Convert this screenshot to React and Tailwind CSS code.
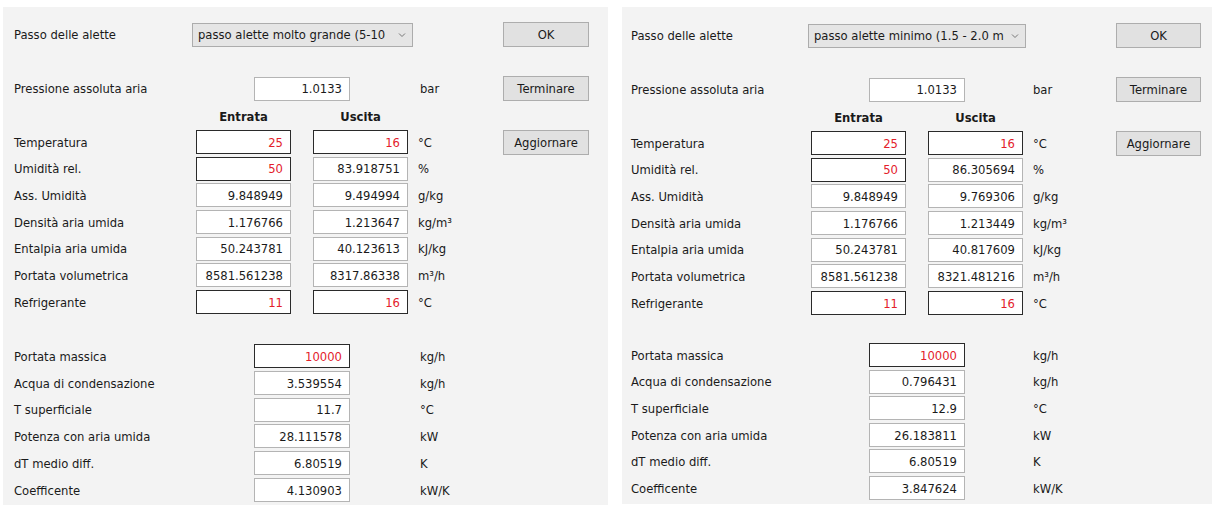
const RED = "text-[#e3202a]";

const leftCfg = {
  panel: "w-[605px] h-[498px] pl-[11px] pt-[15px]",
  lab1: "w-[178px]",
  dd: "w-[221px]",
  okMl: "ml-[90px]",
  btn: "w-[86px]",
  lab2: "w-[240px]",
  barMl: "ml-[70px]",
  barW: "w-[83px]",
  lab3: "w-[182px]",
  unitW: "w-[85px]",
  bottom: "mt-[30px] gap-[2.8px]",
};

const rightCfg = {
  panel: "w-[590px] h-[497px] pl-[9px] pt-[16px]",
  lab1: "w-[177px]",
  dd: "w-[218px]",
  okMl: "ml-[90px]",
  btn: "w-[85px]",
  lab2: "w-[238px]",
  barMl: "ml-[68px]",
  barW: "w-[83px]",
  lab3: "w-[180px]",
  unitW: "w-[83px]",
  bottom: "mt-[28px] gap-[2.6px]",
};

function Field({ value, red, w = "w-[95px]" }) {
  return (
    <div
      className={`${w} h-[24px] bg-white flex items-center justify-end pr-[7px] pt-[3px] border ${
        red ? "border-[#2a2a2a] " + RED : "border-[#b4b4b4] text-[#1a1a1a]"
      }`}
    >
      {value}
    </div>
  );
}

function Button({ label, w }) {
  return (
    <div className={`${w} h-[25px] bg-[#e1e1e1] border border-[#adadad] flex items-center justify-center pt-[3px] text-[#1a1a1a]`}>
      {label}
    </div>
  );
}

function Panel({ c, dropdown, rows, bottom }) {
  return (
    <div className={`${c.panel} bg-[#f3f3f3] flex flex-col shrink-0`}>
      <div className="flex items-center h-[25px]">
        <div className={`${c.lab1} pt-[3px]`}>Passo delle alette</div>
        <div className={`${c.dd} h-[24px] bg-[#e5e5e5] border border-[#acacac] flex items-center pl-[5px] pr-[6px]`}>
          <div className="flex-1 overflow-hidden whitespace-nowrap pt-[2px]">{dropdown}</div>
          <svg width="8" height="6" viewBox="0 0 8 6" className="ml-[4px] shrink-0">
            <polyline points="1,1.5 4,4.5 7,1.5" fill="none" stroke="#777" strokeWidth="1" />
          </svg>
        </div>
        <div className={c.okMl}>
          <Button label="OK" w={c.btn} />
        </div>
      </div>

      <div className="flex items-center h-[25px] mt-[29px]">
        <div className={`${c.lab2} pt-[3px]`}>Pressione assoluta aria</div>
        <Field value="1.0133" w="w-[96px]" />
        <div className={`${c.barMl} ${c.barW} pt-[3px]`}>bar</div>
        <Button label="Terminare" w={c.btn} />
      </div>

      <div className="flex items-center h-[16px] mt-[8px] pt-[2px] font-bold">
        <div className={c.lab3}></div>
        <div className="w-[95px] text-center">Entrata</div>
        <div className="w-[95px] ml-[22px] text-center">Uscita</div>
      </div>

      <div className="flex flex-col gap-[2.67px] mt-[5px]">
        {rows.map((r, i) => (
          <div key={r.label} className="flex items-center h-[24px]">
            <div className={`${c.lab3} pt-[3px]`}>{r.label}</div>
            <Field value={r.a} red={r.red || r.redA} />
            <div className="ml-[22px]">
              <Field value={r.b} red={r.red} />
            </div>
            <div className={`ml-[10px] ${c.unitW} pt-[3px]`}>{r.unit}</div>
            {i === 0 && <Button label="Aggiornare" w={c.btn} />}
          </div>
        ))}
      </div>

      <div className={`flex flex-col ${c.bottom}`}>
        {bottom.map((r) => (
          <div key={r.label} className="flex items-center h-[24px]">
            <div className={`${c.lab2} pt-[3px]`}>{r.label}</div>
            <Field value={r.v} red={r.red} w="w-[96px]" />
            <div className={`${c.barMl} pt-[3px]`}>{r.unit}</div>
          </div>
        ))}
      </div>
    </div>
  );
}

const leftRows = [
  { label: "Temperatura", a: "25", b: "16", unit: "°C", red: true },
  { label: "Umidità rel.", a: "50", b: "83.918751", unit: "%", redA: true },
  { label: "Ass. Umidità", a: "9.848949", b: "9.494994", unit: "g/kg" },
  { label: "Densità aria umida", a: "1.176766", b: "1.213647", unit: "kg/m³" },
  { label: "Entalpia aria umida", a: "50.243781", b: "40.123613", unit: "kJ/kg" },
  { label: "Portata volumetrica", a: "8581.561238", b: "8317.86338", unit: "m³/h" },
  { label: "Refrigerante", a: "11", b: "16", unit: "°C", red: true },
];

const rightRows = [
  { label: "Temperatura", a: "25", b: "16", unit: "°C", red: true },
  { label: "Umidità rel.", a: "50", b: "86.305694", unit: "%", redA: true },
  { label: "Ass. Umidità", a: "9.848949", b: "9.769306", unit: "g/kg" },
  { label: "Densità aria umida", a: "1.176766", b: "1.213449", unit: "kg/m³" },
  { label: "Entalpia aria umida", a: "50.243781", b: "40.817609", unit: "kJ/kg" },
  { label: "Portata volumetrica", a: "8581.561238", b: "8321.481216", unit: "m³/h" },
  { label: "Refrigerante", a: "11", b: "16", unit: "°C", red: true },
];

const leftBottom = [
  { label: "Portata massica", v: "10000", unit: "kg/h", red: true },
  { label: "Acqua di condensazione", v: "3.539554", unit: "kg/h" },
  { label: "T superficiale", v: "11.7", unit: "°C" },
  { label: "Potenza con aria umida", v: "28.111578", unit: "kW" },
  { label: "dT medio diff.", v: "6.80519", unit: "K" },
  { label: "Coefficente", v: "4.130903", unit: "kW/K" },
];

const rightBottom = [
  { label: "Portata massica", v: "10000", unit: "kg/h", red: true },
  { label: "Acqua di condensazione", v: "0.796431", unit: "kg/h" },
  { label: "T superficiale", v: "12.9", unit: "°C" },
  { label: "Potenza con aria umida", v: "26.183811", unit: "kW" },
  { label: "dT medio diff.", v: "6.80519", unit: "K" },
  { label: "Coefficente", v: "3.847624", unit: "kW/K" },
];

export default function App() {
  return (
    <div className="w-[1213px] h-[513px] bg-white flex pt-[7px] pl-[3px] gap-[14px] font-['DejaVu_Sans',sans-serif] text-[11.6px] text-[#1a1a1a]">
      <Panel c={leftCfg} dropdown="passo alette molto grande (5-10" rows={leftRows} bottom={leftBottom} />
      <Panel c={rightCfg} dropdown="passo alette minimo (1.5 - 2.0 m" rows={rightRows} bottom={rightBottom} />
    </div>
  );
}
